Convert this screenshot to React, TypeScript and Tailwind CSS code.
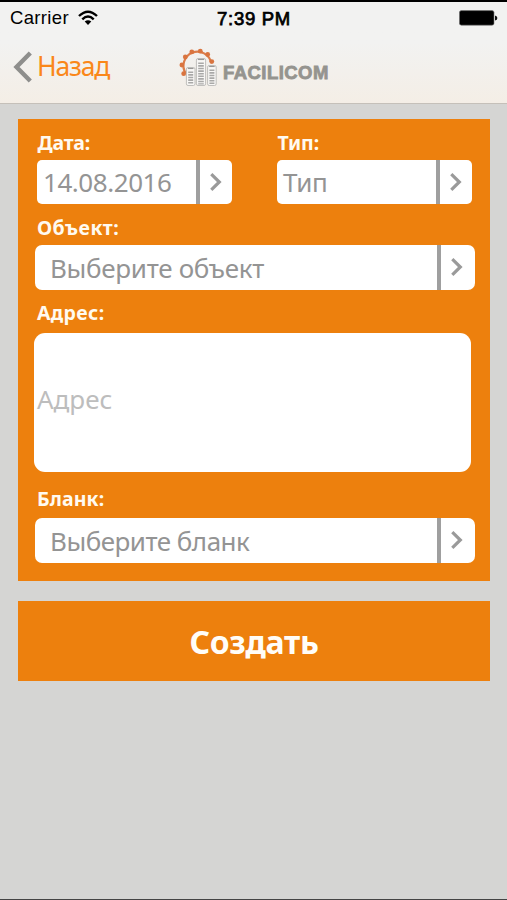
import { ReactNode } from 'react';

function WifiIcon() {
  return (
    <svg className="ml-[9px] h-4 w-5" viewBox="0 0 20 16" fill="none" stroke="#000" strokeWidth="2.4">
      <path d="M1 6 Q10 -2.6 19 6" />
      <path d="M4.3 9.3 Q10 3.8 15.7 9.3" />
      <path d="M10 15 L6.7 11.6 Q10 8.7 13.3 11.6 Z" fill="#000" stroke="none" />
    </svg>
  );
}

function BatteryIcon() {
  return (
    <svg className="h-4 w-[39px]" viewBox="0 0 39 16">
      <rect x="0.4" y="0.6" width="34.6" height="14.6" rx="2" fill="#000" stroke="#777" strokeWidth="0.6" />
      <path d="M36 5.5 Q38.4 6 38.4 8 Q38.4 10 36 10.5 Z" fill="#111" />
    </svg>
  );
}

const teeth = [
  [4.7, 25.7],
  [2.9, 17],
  [6.3, 9],
  [12.8, 3.9],
  [21.3, 3.2],
  [28.7, 6.5],
  [32.8, 13.6],
];

const towers = [
  { x: 7.4, y: 19.5, w: 8.6, h: 18 },
  { x: 17.4, y: 10.5, w: 9.2, h: 27 },
  { x: 28.6, y: 17.5, w: 8.6, h: 20 },
];

function LogoMark() {
  return (
    <svg className="h-[38px] w-[38px]" viewBox="0 0 38 38">
      <path d="M6.7 25.3 A14 14 0 1 1 32.2 15" fill="none" stroke="#dc7d4a" strokeWidth="2.2" />
      {teeth.map(([x, y]) => (
        <circle key={x} cx={x} cy={y} r="2.4" fill="#d9743f" />
      ))}
      {towers.map((t) => (
        <g key={t.x}>
          <rect x={t.x} y={t.y} width={t.w} height={t.h} rx="1.6" fill="#f8f7f5" stroke="#b9b8b6" strokeWidth="0.9" />
          <path
            d={`M${t.x + t.w / 2} ${t.y + 4} V${t.y + t.h - 1}`}
            stroke="#a9a9a8"
            strokeWidth={t.w - 3.6}
            strokeDasharray="1.6 1"
          />
          <path d={`M${t.x + 1.5} ${t.y + 1} H${t.x + t.w - 1.5}`} stroke="#999896" strokeWidth="1.1" />
        </g>
      ))}
    </svg>
  );
}

interface LabelProps {
  children: ReactNode;
  className?: string;
}

function Label({ children, className = 'tracking-[0.1px]' }: LabelProps) {
  return (
    <div className={`-mt-px mb-px h-6 pl-[2px] text-[19.5px] leading-6 font-bold text-[#fffaf0] ${className}`}>
      {children}
    </div>
  );
}

interface SelectFieldProps {
  value: string;
  wide?: boolean;
  textClass?: string;
}

function SelectField({ value, wide, textClass = 'tracking-[-0.45px]' }: SelectFieldProps) {
  return (
    <button
      className={`flex items-stretch overflow-hidden bg-white text-left text-[26px] text-[#949494] ${
        wide ? 'h-[45px] w-[440px] rounded-[7px] pl-[14px]' : 'h-11 w-[195px] rounded-[5px] pl-[6.5px]'
      }`}
    >
      <span className={`flex-1 leading-[43px] ${wide ? 'pt-[2px]' : 'pt-px'} ${textClass}`}>{value}</span>
      <span className={`flex items-center border-l-4 border-[#9f9f9f] pb-px pl-[10px] ${wide ? 'w-[38px]' : 'w-[36px]'}`}>
        <svg className="h-[18px] w-3" viewBox="0 0 12 18" fill="none" stroke="#9a9a9a" strokeWidth="3.2">
          <path d="M1.3 1.2 L9.3 9 L1.3 16.8" />
        </svg>
      </span>
    </button>
  );
}

export default function App() {
  return (
    <div className="flex h-[900px] w-[507px] flex-col overflow-hidden border-t-2 border-b border-t-black border-b-[#444] bg-[#d5d5d3] font-['Noto_Sans',sans-serif]">
      <header className="h-[102px] shrink-0 border-b border-[#c5c0b9] bg-linear-to-b from-[#f2f2f1] from-40% to-[#f4eee6]">
        <div className="grid h-8 grid-cols-3 items-center pr-[9px] pl-[10px] font-['Liberation_Sans',Arial,sans-serif] text-[18.5px] text-black">
          <div className="flex items-center">
            <span className="tracking-[0.35px]">Carrier</span>
            <WifiIcon />
          </div>
          <div className="pt-px text-center tracking-[0.7px] [-webkit-text-stroke:0.75px_#000]">7:39 PM</div>
          <div className="flex justify-end">
            <BatteryIcon />
          </div>
        </div>
        <div className="flex h-[66px] items-center pl-[13px]">
          <button className="flex w-[166px] items-center gap-[5px] text-[26.5px] tracking-[-1.2px] text-[#fa8719]">
            <svg className="h-8 w-[19px]" viewBox="0 0 19 32" fill="none" stroke="#8e8e8c" strokeWidth="4.4">
              <path d="M17.3 2 L3.5 16 L17.3 30" />
            </svg>
            <span>Назад</span>
          </button>
          <div className="flex items-center gap-[6px]">
            <LogoMark />
            <span className="pt-[11px] font-['Liberation_Sans',Arial,sans-serif] text-[18.5px] leading-5 font-bold tracking-[0.45px] text-[#95948f] [-webkit-text-stroke:0.8px_#95948f]">
              FACILICOM
            </span>
          </div>
        </div>
      </header>

      <main className="flex flex-col gap-5 pt-[15px] pr-[17px] pl-[18px]">
        <section className="h-[462px] bg-[#ed800d] pt-[13px] pl-[17px]">
          <div className="flex gap-[45px] pl-[1.5px]">
            <div>
              <Label className="-ml-px tracking-[-0.2px]">Дата:</Label>
              <div className="pt-1">
                <SelectField value="14.08.2016" />
              </div>
            </div>
            <div>
              <Label className="-ml-px tracking-[-0.1px]">Тип:</Label>
              <div className="pt-1">
                <SelectField value="Тип" />
              </div>
            </div>
          </div>
          <div className="pt-[13px]">
            <Label className="tracking-[0.45px]">Объект:</Label>
            <div className="pt-1">
              <SelectField wide value="Выберите объект" textClass="pl-px tracking-[-0.3px]" />
            </div>
          </div>
          <div className="pt-3">
            <Label className="tracking-[0.35px]">Адрес:</Label>
            <div className="-ml-px pt-[7px]">
              <div className="flex h-[139px] w-[437px] items-center rounded-[11px] bg-white pb-[6px] pl-[3px] text-[26px] text-[#bdbdbd]">
                Адрес
              </div>
            </div>
          </div>
          <div className="pt-4">
            <Label>Бланк:</Label>
            <div className="pt-[6px]">
              <SelectField wide value="Выберите бланк" textClass="pl-px tracking-[-0.5px]" />
            </div>
          </div>
        </section>
        <button className="h-20 bg-[#ed800d] pt-px text-[32px] font-bold tracking-[-0.3px] text-[#fffdf8]">Создать</button>
      </main>
    </div>
  );
}
